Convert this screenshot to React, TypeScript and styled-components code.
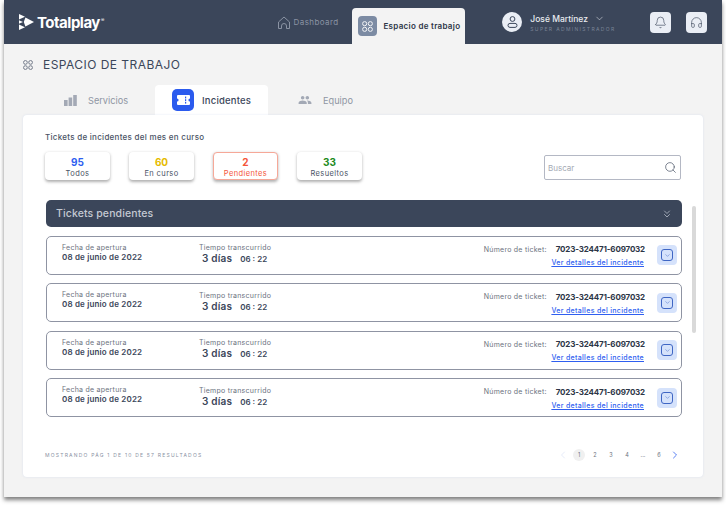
import styled, { createGlobalStyle } from "styled-components";
import { Bell, ChevronDown, ChevronLeft, ChevronRight, ChevronsDown, Headphones, Search } from "lucide-react";
import { MdPeople } from "react-icons/md";

const GlobalStyle = createGlobalStyle`
  html, body { margin: 0; padding: 0; background: #ffffff; }
  body { font-family: Inter, "Liberation Sans", sans-serif; color: #3b465a; min-height: 505px; overflow: hidden; }
  #root { min-height: 505px; }
  * { box-sizing: border-box; }
`;

const GridIcon = ({ size, color }: { size: number; color: string }) => (
  <svg width={size} height={size} viewBox="0 0 12 12" fill="none" stroke={color} strokeWidth="1">
    <rect x="0.7" y="0.7" width="4.4" height="4.4" rx="2" />
    <rect x="6.9" y="0.7" width="4.4" height="4.4" rx="2" />
    <rect x="0.7" y="6.9" width="4.4" height="4.4" rx="2" />
    <rect x="6.9" y="6.9" width="4.4" height="4.4" rx="2" />
  </svg>
);

const stats = [
  { value: "95", label: "Todos", color: "#2f5ff0" },
  { value: "60", label: "En curso", color: "#e6bb00" },
  { value: "2", label: "Pendientes", color: "#f4553a", active: true },
  { value: "33", label: "Resueltos", color: "#1c8a1c" },
];

export default function App() {
  return (
    <>
      <GlobalStyle />
      <Frame>
        <Header>
          <Logo>
            <svg width="15" height="16" viewBox="0 0 15 16" fill="#ffffff">
              <polygon points="0,0 6,2.8 0,5.4" />
              <polygon points="0,6.2 4,8 0,9.8" />
              <polygon points="0,10.6 6,13.2 0,16" />
              <polygon points="6.4,3.4 15,8 6.4,12.6 4.8,8" />
            </svg>
            <LogoText>Totalplay</LogoText>
            <LogoMark>®</LogoMark>
          </Logo>
          <NavLink>
            <svg width="14" height="13" viewBox="0 0 14 13" fill="none" stroke="#8a93a3" strokeWidth="1">
              <path d="M1.5 12.5V6L7 1l5.5 5v6.5H9.5V10a2.5 2.5 0 0 0-5 0v2.5z" strokeLinejoin="round" />
            </svg>
            Dashboard
          </NavLink>
          <NavTab>
            <NavTabIcon>
              <GridIcon size={11} color="#ffffff" />
            </NavTabIcon>
            Espacio de trabajo
          </NavTab>
          <User>
            <Avatar>
              <svg width="11" height="12" viewBox="0 0 11 12" fill="none" stroke="#3b465a" strokeWidth="1">
                <circle cx="5.5" cy="3" r="2.4" />
                <rect x="1" y="7.4" width="9" height="4" rx="2" />
              </svg>
            </Avatar>
            <UserText>
              <UserName>
                José Martínez
                <ChevronDown size={11} strokeWidth={1.2} />
              </UserName>
              <UserRole>SUPER ADMINISTRADOR</UserRole>
            </UserText>
          </User>
          <HeaderButton>
            <Bell size={13} strokeWidth={1.2} />
          </HeaderButton>
          <HeaderButton>
            <Headphones size={13} strokeWidth={1.2} />
          </HeaderButton>
        </Header>

        <Main>
          <PageTitle>
            <GridIcon size={10} color="#5f6878" />
            ESPACIO DE TRABAJO
          </PageTitle>

          <Tabs>
            <Tab $width={132} $left={41}>
              <svg width="13" height="11" viewBox="0 0 13 11" fill="#a3a9b5">
                <rect x="0" y="5" width="3.6" height="6" />
                <rect x="4.6" y="2.5" width="3.6" height="8.5" />
                <rect x="9.2" y="0" width="3.6" height="11" />
              </svg>
              Servicios
            </Tab>
            <ActiveTab>
              <TicketBadge>
                <svg width="13" height="10" viewBox="0 0 13 10" fill="#ffffff">
                  <path d="M1 0h11a1 1 0 0 1 1 1v2.4a1.6 1.6 0 0 0 0 3.2V9a1 1 0 0 1-1 1H1a1 1 0 0 1-1-1V6.6a1.6 1.6 0 0 0 0-3.2V1a1 1 0 0 1 1-1z" />
                  <rect x="8" y="1.6" width="1.2" height="1.8" fill="#2b5bee" />
                  <rect x="8" y="4.2" width="1.2" height="1.8" fill="#2b5bee" />
                  <rect x="8" y="6.8" width="1.2" height="1.8" fill="#2b5bee" />
                </svg>
              </TicketBadge>
              Incidentes
            </ActiveTab>
            <Tab $width={100} $left={30}>
              <MdPeople size={14} color="#a3a9b5" />
              Equipo
            </Tab>
          </Tabs>

          <Card>
            <CardLabel>Tickets de incidentes del mes en curso</CardLabel>
            <Toolbar>
              <Stats>
                {stats.map((s) => (
                  <Stat key={s.label} $active={s.active}>
                    <StatValue $color={s.color}>{s.value}</StatValue>
                    <StatLabel $color={s.active ? s.color : undefined}>{s.label}</StatLabel>
                  </Stat>
                ))}
              </Stats>
              <SearchBox>
                Buscar
                <Search size={13} strokeWidth={1.2} color="#3b465a" />
              </SearchBox>
            </Toolbar>

            <ListArea>
              <List>
                <ListHeader>
                  Tickets pendientes
                  <ChevronsDown size={12} strokeWidth={1.4} color="#c9ced8" />
                </ListHeader>
                {[0, 1, 2, 3].map((i) => (
                  <Row key={i}>
                    <DateCol>
                      <SmallLabel>Fecha de apertura</SmallLabel>
                      <DateValue>08 de junio de 2022</DateValue>
                    </DateCol>
                    <TimeCol>
                      <SmallLabel>Tiempo transcurrido</SmallLabel>
                      <TimeValue>
                        <Days>3 días</Days>
                        <Clock>06 : 22</Clock>
                      </TimeValue>
                    </TimeCol>
                    <TicketCol>
                      <TicketLine>
                        <SmallLabel>Número de ticket:</SmallLabel>
                        <TicketNumber>7023-324471-6097032</TicketNumber>
                      </TicketLine>
                      <DetailLink>Ver detalles del incidente</DetailLink>
                    </TicketCol>
                    <ExpandButton>
                      <ExpandInner>
                        <ChevronDown size={7} strokeWidth={1.6} />
                      </ExpandInner>
                    </ExpandButton>
                  </Row>
                ))}
              </List>
              <ScrollThumb />
            </ListArea>

            <Footer>
              <Results>MOSTRANDO PÁG 1 DE 10 DE 57 RESULTADOS</Results>
              <Pagination>
                <ChevronLeft size={12} strokeWidth={1.2} color="#d5def5" />
                <PageNumber $current>1</PageNumber>
                <PageNumber>2</PageNumber>
                <PageNumber>3</PageNumber>
                <PageNumber>4</PageNumber>
                <PageNumber>...</PageNumber>
                <PageNumber>6</PageNumber>
                <ChevronRight size={12} strokeWidth={1.6} color="#2f5ff0" />
              </Pagination>
            </Footer>
          </Card>
        </Main>
      </Frame>
    </>
  );
}

const Frame = styled.div`
  width: 718px;
  height: 497px;
  margin-left: 4px;
  background: #f3f3f3;
  box-shadow: 0 3px 4px rgba(0, 0, 0, 0.5);
  display: flex;
  flex-direction: column;
`;

const Header = styled.header`
  height: 44px;
  background: #3b465a;
  display: flex;
  align-items: flex-end;
  flex-shrink: 0;
`;

const Logo = styled.div`
  width: 273px;
  height: 44px;
  padding-left: 15px;
  display: flex;
  align-items: center;
  color: #ffffff;
`;

const LogoText = styled.span`
  font-size: 15px;
  font-weight: 700;
  letter-spacing: -0.5px;
  margin-left: 3px;
`;

const LogoMark = styled.span`
  font-size: 5px;
  margin: -4px 0 0 1px;
`;

const NavLink = styled.div`
  width: 76px;
  height: 44px;
  display: flex;
  align-items: center;
  gap: 3px;
  font-size: 8px;
  letter-spacing: 0.4px;
  color: #8a93a3;
`;

const NavTab = styled.div`
  width: 113px;
  height: 36px;
  background: #f3f3f3;
  border-radius: 4px 4px 0 0;
  padding-left: 6px;
  display: flex;
  align-items: center;
  gap: 6px;
  font-size: 8px;
  font-weight: 600;
  letter-spacing: 0.3px;
  color: #2c3546;
  white-space: nowrap;
`;

const NavTabIcon = styled.span`
  width: 19px;
  height: 20px;
  border-radius: 4px;
  background: #7c8ba3;
  display: flex;
  align-items: center;
  justify-content: center;
`;

const User = styled.div`
  width: 148px;
  height: 44px;
  margin-left: 37px;
  display: flex;
  align-items: center;
  gap: 8px;
`;

const Avatar = styled.span`
  width: 20px;
  height: 20px;
  border-radius: 50%;
  background: #eaeef5;
  display: flex;
  align-items: center;
  justify-content: center;
`;

const UserText = styled.div`
  display: flex;
  flex-direction: column;
  gap: 2px;
  padding-top: 1px;
`;

const UserName = styled.div`
  display: flex;
  align-items: center;
  gap: 6px;
  font-size: 8.5px;
  font-weight: 500;
  color: #e8ebf0;
`;

const UserRole = styled.div`
  font-size: 5px;
  letter-spacing: 1.35px;
  color: #7a8496;
`;

const HeaderButton = styled.span`
  width: 21px;
  height: 21px;
  margin: 0 15px 11.5px 0;
  border-radius: 4px;
  background: #eaeef5;
  color: #3b465a;
  display: flex;
  align-items: center;
  justify-content: center;
`;

const Main = styled.main`
  flex: 1;
  padding: 0 19px 20px;
  display: flex;
  flex-direction: column;
`;

const PageTitle = styled.h1`
  margin: 0;
  height: 41px;
  display: flex;
  align-items: center;
  gap: 10px;
  font-size: 12px;
  font-weight: 400;
  letter-spacing: 0.45px;
  color: #3b465a;
`;

const Tabs = styled.div`
  display: flex;
  height: 30px;
`;

const Tab = styled.div<{ $width: number; $left: number }>`
  width: ${(p) => p.$width}px;
  padding-left: ${(p) => p.$left}px;
  display: flex;
  align-items: center;
  gap: 11px;
  font-size: 9.2px;
  color: #8f96a3;
`;

const ActiveTab = styled.div`
  width: 113px;
  padding-left: 17px;
  background: #ffffff;
  border-radius: 4px 4px 0 0;
  display: flex;
  align-items: center;
  gap: 8px;
  font-size: 9.5px;
  font-weight: 500;
  letter-spacing: 0.2px;
  color: #3b465a;
`;

const TicketBadge = styled.span`
  width: 22px;
  height: 22px;
  border-radius: 5px;
  background: #2b5bee;
  display: flex;
  align-items: center;
  justify-content: center;
`;

const Card = styled.section`
  flex: 1;
  background: #ffffff;
  border-radius: 4px;
  padding: 16px 0 0 22px;
  box-shadow: 0 0 2px rgba(190, 205, 235, 0.5);
`;

const CardLabel = styled.div`
  font-size: 8px;
  font-weight: 500;
  letter-spacing: 0.28px;
  color: #4a5365;
  line-height: 10px;
  padding-top: 1px;
`;

const Toolbar = styled.div`
  margin-top: 10px;
  width: 636px;
  display: flex;
  justify-content: space-between;
  align-items: flex-start;
`;

const Stats = styled.div`
  display: flex;
  gap: 19px;
`;

const Stat = styled.div<{ $active?: boolean }>`
  width: 65px;
  height: 28px;
  padding-top: 2px;
  border-radius: 4px;
  background: #ffffff;
  border: 1px solid ${(p) => (p.$active ? "#f6a898" : "transparent")};
  box-shadow: 0 1.5px 3px rgba(60, 60, 60, 0.4);
  display: flex;
  flex-direction: column;
  align-items: center;
  justify-content: center;
`;

const StatValue = styled.div<{ $color: string }>`
  font-size: 10px;
  font-weight: 700;
  line-height: 12px;
  color: ${(p) => p.$color};
`;

const StatLabel = styled.div<{ $color?: string }>`
  font-size: 7.5px;
  letter-spacing: 0.4px;
  line-height: 11px;
  color: ${(p) => p.$color ?? "#4a5365"};
`;

const SearchBox = styled.div`
  width: 137px;
  height: 25px;
  margin-top: 3px;
  border: 1px solid #b4b8c4;
  border-radius: 2px;
  padding: 0 3px 0 3px;
  display: flex;
  align-items: center;
  justify-content: space-between;
  font-size: 8px;
  color: #a4a9b4;
`;

const ListArea = styled.div`
  margin-top: 20px;
  display: flex;
  align-items: flex-start;
`;

const List = styled.div`
  margin-left: 1px;
  width: 636px;
  display: flex;
  flex-direction: column;
  gap: 8.5px;
`;

const ListHeader = styled.div`
  height: 27px;
  background: #3b465a;
  border-radius: 5px;
  padding: 0 9px 0 10px;
  display: flex;
  align-items: center;
  justify-content: space-between;
  font-size: 10.5px;
  font-weight: 500;
  letter-spacing: 0.12px;
  color: #c4c9d2;
`;

const Row = styled.div`
  height: 39px;
  border: 1px solid #8f94a3;
  border-radius: 5px;
  padding-left: 15px;
  display: flex;
  align-items: center;
`;

const DateCol = styled.div`
  width: 137px;
  display: flex;
  flex-direction: column;
  margin-top: -6px;
`;

const TimeCol = styled.div`
  display: flex;
  flex-direction: column;
  margin-top: -1px;
`;

const SmallLabel = styled.span`
  font-size: 7px;
  letter-spacing: 0.25px;
  line-height: 9px;
  color: #6b7280;
  white-space: nowrap;
`;

const DateValue = styled.span`
  font-size: 8px;
  letter-spacing: 0.17px;
  line-height: 10px;
  font-weight: 600;
  color: #3b465a;
`;

const TimeValue = styled.div`
  display: flex;
  align-items: baseline;
  gap: 8px;
  padding-left: 3px;
  line-height: 13px;
`;

const Days = styled.span`
  font-size: 10px;
  letter-spacing: 0.2px;
  font-weight: 600;
`;

const Clock = styled.span`
  font-size: 8px;
  font-weight: 600;
`;

const TicketCol = styled.div`
  margin-left: auto;
  display: flex;
  flex-direction: column;
  align-items: flex-end;
  gap: 4px;
  padding-top: 1px;
`;

const TicketLine = styled.div`
  display: flex;
  align-items: center;
  gap: 9px;
`;

const TicketNumber = styled.span`
  font-size: 8px;
  font-weight: 700;
  letter-spacing: -0.16px;
  color: #2c3546;
`;

const DetailLink = styled.span`
  margin-right: 1px;
  font-size: 7px;
  font-weight: 500;
  letter-spacing: 0.32px;
  color: #2f5ff0;
  text-decoration: underline;
`;

const ExpandButton = styled.span`
  width: 20px;
  height: 20px;
  margin: 0 4px 0 12px;
  border-radius: 4px;
  background: #d5e2fb;
  display: flex;
  align-items: center;
  justify-content: center;
`;

const ExpandInner = styled.span`
  width: 12px;
  height: 12px;
  border: 1px solid #3f66c4;
  border-radius: 3px;
  color: #3f66c4;
  display: flex;
  align-items: center;
  justify-content: center;
`;

const ScrollThumb = styled.div`
  width: 4px;
  height: 127px;
  margin: 6px 0 0 10px;
  background: #d9d9d9;
  border-radius: 2px;
`;

const Footer = styled.div`
  width: 636px;
  margin-top: 32px;
  display: flex;
  align-items: center;
  justify-content: space-between;
`;

const Results = styled.div`
  font-size: 5px;
  letter-spacing: 1.22px;
  color: #8a92a3;
`;

const Pagination = styled.div`
  display: flex;
  align-items: center;
  gap: 4px;
`;

const PageNumber = styled.span<{ $current?: boolean }>`
  width: 12px;
  height: 12px;
  border-radius: 50%;
  background: ${(p) => (p.$current ? "#f0f0f0" : "transparent")};
  font-size: 5.5px;
  color: #6b7280;
  display: flex;
  align-items: center;
  justify-content: center;
`;
